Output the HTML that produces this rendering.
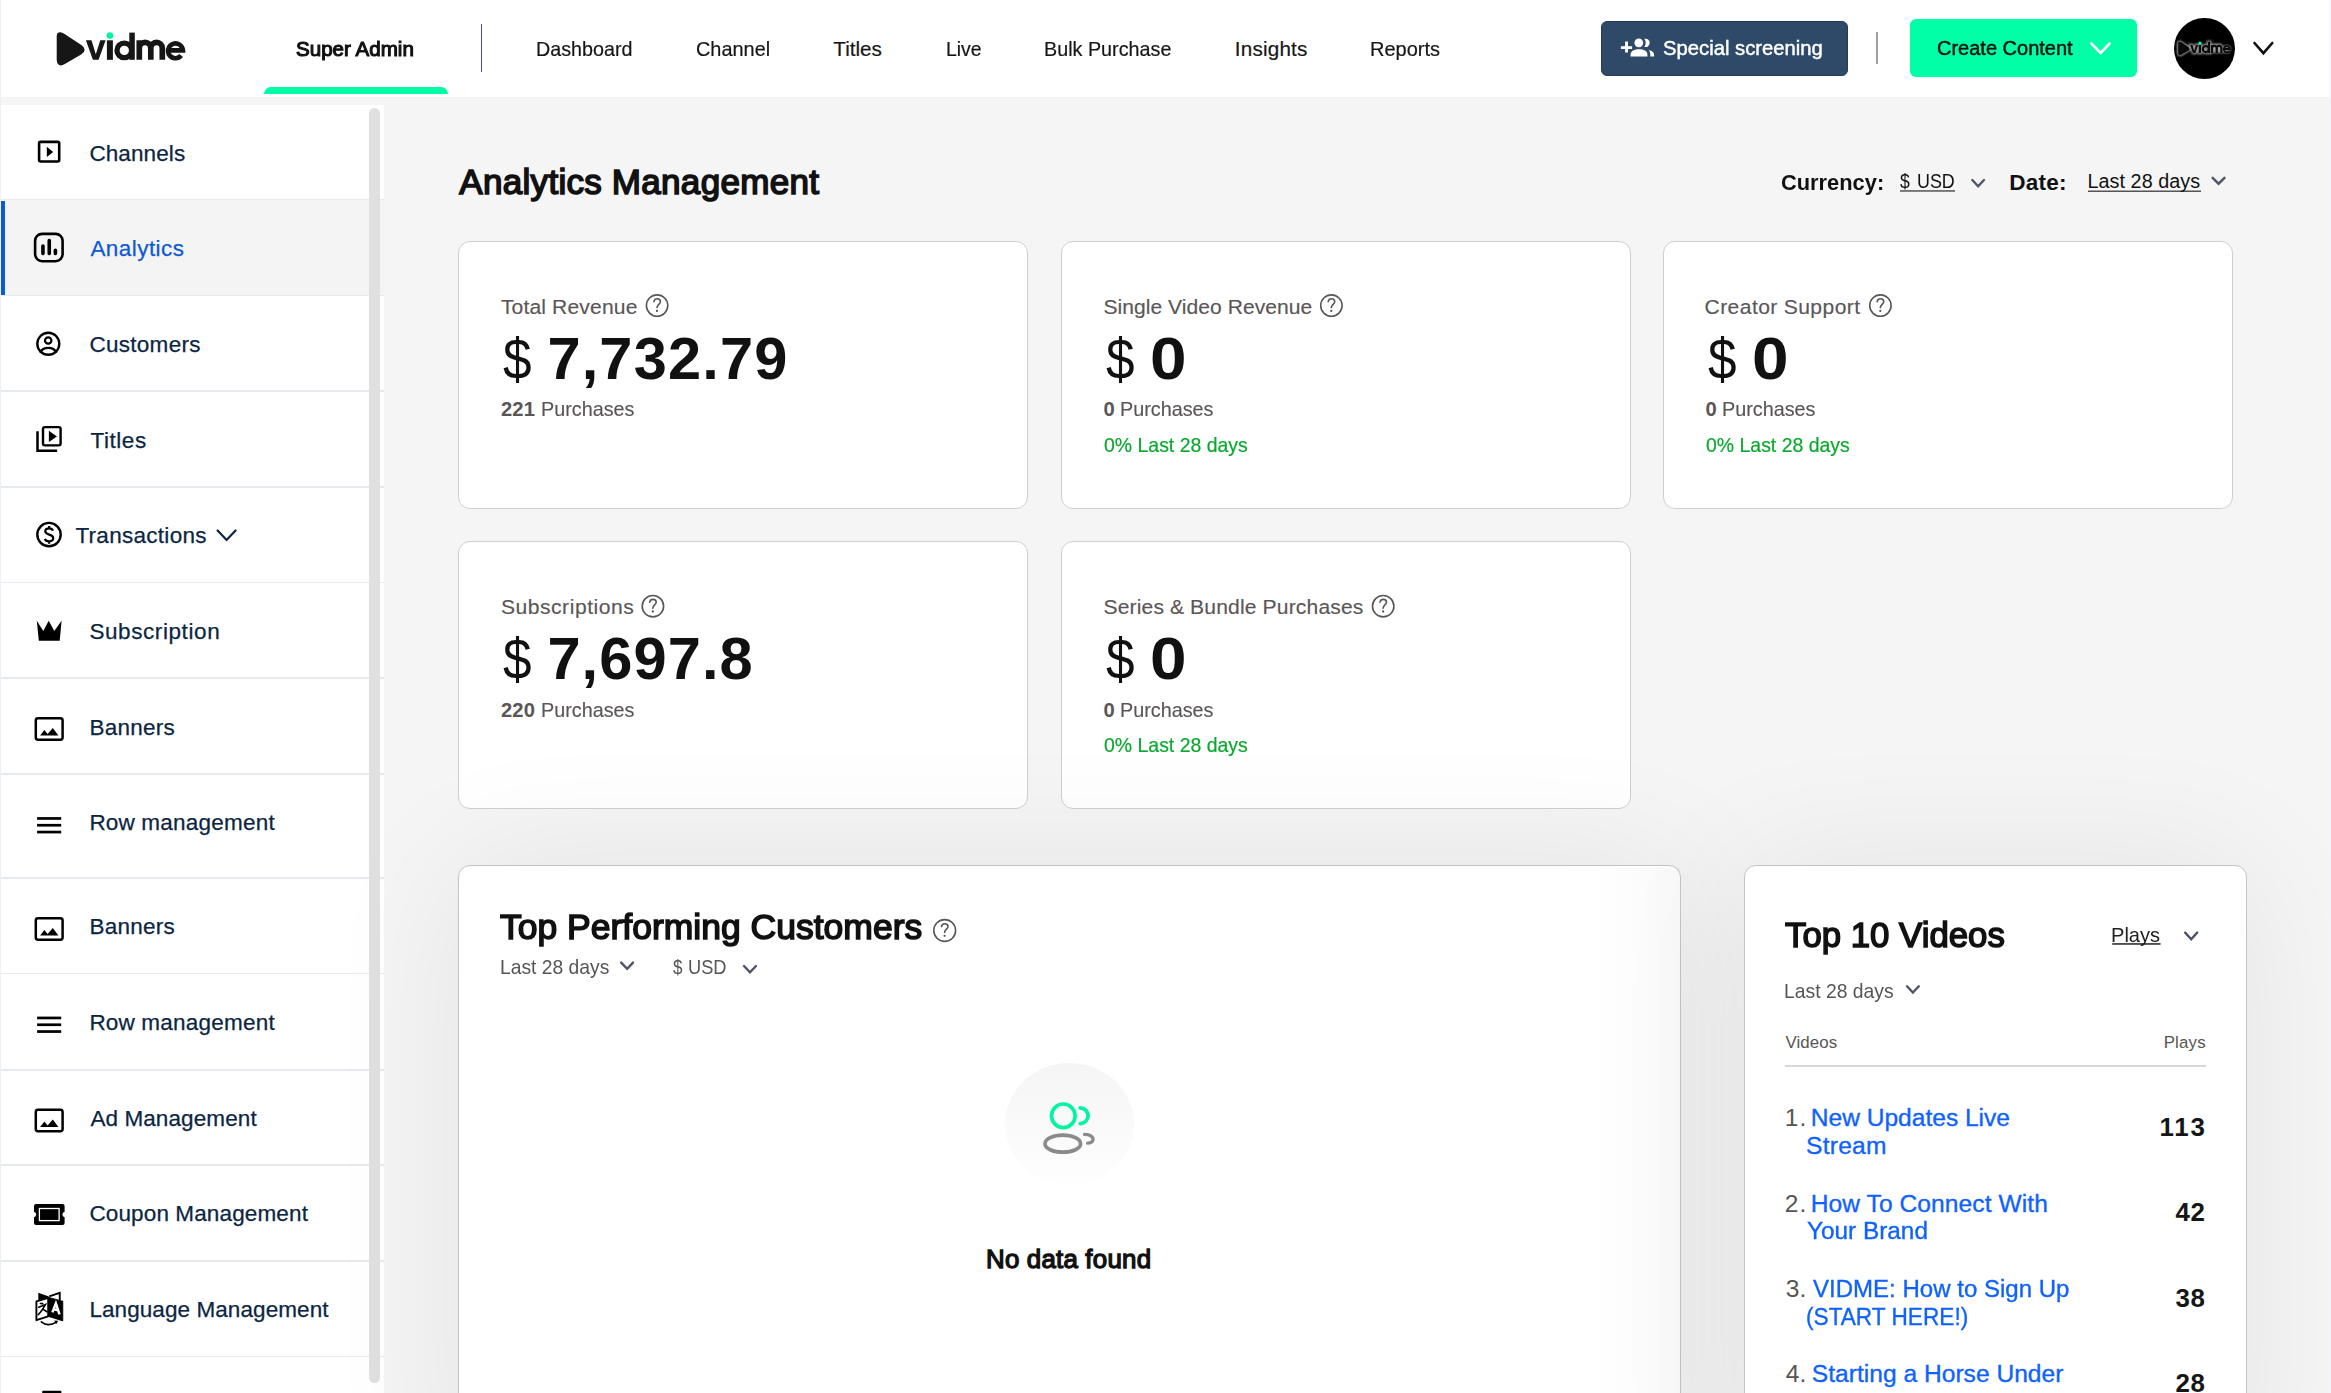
<!DOCTYPE html>
<html><head><meta charset="utf-8"><style>
html,body{margin:0;padding:0;}
body{width:2331px;height:1393px;overflow:hidden;position:relative;background:#f5f5f6;font-family:"Liberation Sans", sans-serif;}
.t{position:absolute;white-space:nowrap;}
.a{position:absolute;}
</style></head><body>
<div class="a" style="left:0px;top:0px;width:2331px;height:97px;background:#fff;"></div>
<div class="a" style="left:0px;top:105px;width:384px;height:1288px;background:#fff;"></div>
<div class="a" style="left:0px;top:0px;width:1.2px;height:1393px;background:#eceef8;z-index:1;"></div>
<div class="a" style="left:2329.8px;top:0px;width:1.2px;height:1393px;background:#f0f0f8;z-index:1;"></div>
<div class="a" style="left:1.2px;top:199.5px;width:382.8px;height:96px;background:#f4f4f4;"></div>
<div class="a" style="left:1.2px;top:200.5px;width:4.3px;height:95px;background:#0f5ad0;"></div>
<div class="a" style="left:0px;top:198.75px;width:384px;height:1.5px;background:#e6e9ed;"></div>
<div class="a" style="left:0px;top:294.75px;width:384px;height:1.5px;background:#e6e9ed;"></div>
<div class="a" style="left:0px;top:390.25px;width:384px;height:1.5px;background:#e6e9ed;"></div>
<div class="a" style="left:0px;top:486.25px;width:384px;height:1.5px;background:#e6e9ed;"></div>
<div class="a" style="left:0px;top:581.75px;width:384px;height:1.5px;background:#e6e9ed;"></div>
<div class="a" style="left:0px;top:677.25px;width:384px;height:1.5px;background:#e6e9ed;"></div>
<div class="a" style="left:0px;top:773.25px;width:384px;height:1.5px;background:#e6e9ed;"></div>
<div class="a" style="left:0px;top:877.25px;width:384px;height:1.5px;background:#e6e9ed;"></div>
<div class="a" style="left:0px;top:972.75px;width:384px;height:1.5px;background:#e6e9ed;"></div>
<div class="a" style="left:0px;top:1069.25px;width:384px;height:1.5px;background:#e6e9ed;"></div>
<div class="a" style="left:0px;top:1164.25px;width:384px;height:1.5px;background:#e6e9ed;"></div>
<div class="a" style="left:0px;top:1260.25px;width:384px;height:1.5px;background:#e6e9ed;"></div>
<div class="a" style="left:0px;top:1355.75px;width:384px;height:1.5px;background:#e6e9ed;"></div>
<div class="a" style="left:369px;top:108px;width:11px;height:1275px;background:#e0e0e0;border-radius:6px;"></div>
<div class="a" style="left:264px;top:87px;width:184px;height:7px;background:#00fda6;border-radius:7px 7px 0 0;"></div>
<div class="a" style="left:480.6px;top:24px;width:1.6px;height:48px;background:#4b5070;"></div>
<div class="a" style="left:1876px;top:31.6px;width:2px;height:32.2px;background:#a0a0a0;"></div>
<div class="a" style="left:1601px;top:21px;width:246.5px;height:54.5px;background:#2f4a68;border-radius:6px;box-sizing:border-box;border:1px solid #223d5c;"></div>
<div class="a" style="left:1910.2px;top:19.3px;width:227.1px;height:57.4px;background:#00ffa6;border-radius:6px;"></div>
<div class="a" style="left:2173.5px;top:17.5px;width:61.2px;height:61.4px;background:#000;border-radius:50%;"></div>
<div class="a" style="left:457.7px;top:240.8px;width:570.5px;height:267.9px;background:#fff;box-sizing:border-box;border:1.6px solid #cfcfcf;border-radius:12px;"></div>
<div class="a" style="left:1060.5px;top:240.8px;width:570.3px;height:267.9px;background:#fff;box-sizing:border-box;border:1.6px solid #cfcfcf;border-radius:12px;"></div>
<div class="a" style="left:1663.3px;top:240.8px;width:569.7px;height:267.9px;background:#fff;box-sizing:border-box;border:1.6px solid #cfcfcf;border-radius:12px;"></div>
<div class="a" style="left:457.7px;top:541.3px;width:570.5px;height:267.9000000000001px;background:#fff;box-sizing:border-box;border:1.6px solid #cfcfcf;border-radius:12px;"></div>
<div class="a" style="left:1060.5px;top:541.3px;width:570.3px;height:267.9000000000001px;background:#fff;box-sizing:border-box;border:1.6px solid #cfcfcf;border-radius:12px;"></div>
<div class="a" style="left:457.9px;top:865.3px;width:1223.1999999999998px;height:634.7px;background:#fff;box-sizing:border-box;border:1.6px solid #c4c4c4;border-radius:12px;box-shadow:0 0 140px 0 rgba(0,0,0,0.075);"></div>
<div class="a" style="left:1744.2px;top:865.3px;width:502.79999999999995px;height:634.7px;background:#fff;box-sizing:border-box;border:1.6px solid #c4c4c4;border-radius:12px;box-shadow:0 0 140px 0 rgba(0,0,0,0.075);"></div>
<div class="a" style="left:1590px;top:867px;width:89.5px;height:526px;background:linear-gradient(90deg,rgba(0,0,0,0),rgba(0,0,0,0.022));"></div>
<div class="a" style="left:1004.5px;top:1063px;width:129.5px;height:122px;background:linear-gradient(#f5f5f5,#fefefe);border-radius:50%;"></div>
<div class="a" style="left:1785.4px;top:1064.8px;width:420.8px;height:2px;background:#d8d8d8;"></div>
<svg class="a" style="left:0;top:0" width="2331" height="1393" viewBox="0 0 2331 1393"><g transform="translate(40,15) scale(1.0)" fill="#161616" stroke="#161616"><path d="M19.2,21.2 L19.2,45 Q19.2,49.5 23.2,47.2 L40.3,37 Q44,34.6 40.3,32.3 L23.2,21 Q19.2,18.4 19.2,21.2 Z" stroke-width="5" stroke-linejoin="round"/><path d="M45.9,25.3 H51.5 L55.8,39.2 L60.3,25.3 H65.6 L58.6,44.8 H52.9 Z" stroke="none"/><rect x="66.9" y="25.3" width="6" height="19.5" stroke="none"/><circle cx="84.3" cy="35.4" r="7.3" fill="none" stroke-width="5.3"/><rect x="89.3" y="17.6" width="5.5" height="27.2" stroke="none"/><path d="M99.3,44.8 V25.3 M99.3,33.2 A5.75,5.75 0 0 1 110.8,33.2 V44.8 M110.8,33.2 A5.75,5.75 0 0 1 122.3,33.2 V44.8" fill="none" stroke-width="5.7"/><path d="M128.4,35.3 H142.9 A7.4,7.4 0 1 0 141.2,40.6" fill="none" stroke-width="4.7"/></g><circle cx="109.9" cy="35.6" r="3.3" fill="#00f5a3"/><defs><filter id="gl" x="-20%" y="-50%" width="140%" height="200%"><feGaussianBlur stdDeviation="2.2"/></filter></defs><g transform="translate(2171.3,34.6) scale(0.41)" fill="none" stroke="#bbbbbb" stroke-width="6" filter="url(#gl)"><path d="M19.2,21.2 L19.2,45 Q19.2,49.5 23.2,47.2 L40.3,37 Q44,34.6 40.3,32.3 L23.2,21 Q19.2,18.4 19.2,21.2 Z" stroke-width="9" stroke-linejoin="round"/><path d="M45.9,25.3 H51.5 L55.8,39.2 L60.3,25.3 H65.6 L58.6,44.8 H52.9 Z" stroke="#9a9a9a"/><rect x="66.9" y="25.3" width="6" height="19.5" stroke="#9a9a9a"/><circle cx="84.3" cy="35.4" r="7.3" fill="none" stroke-width="9"/><rect x="89.3" y="17.6" width="5.5" height="27.2" stroke="#9a9a9a"/><path d="M99.3,44.8 V25.3 M99.3,33.2 A5.75,5.75 0 0 1 110.8,33.2 V44.8 M110.8,33.2 A5.75,5.75 0 0 1 122.3,33.2 V44.8" fill="none" stroke-width="10"/><path d="M128.4,35.3 H142.9 A7.4,7.4 0 1 0 141.2,40.6" fill="none" stroke-width="4.7"/></g><g transform="translate(2171.3,34.6) scale(0.41)" fill="#0a0a0a" stroke="#0a0a0a"><path d="M19.2,21.2 L19.2,45 Q19.2,49.5 23.2,47.2 L40.3,37 Q44,34.6 40.3,32.3 L23.2,21 Q19.2,18.4 19.2,21.2 Z" stroke-width="5" stroke-linejoin="round"/><path d="M45.9,25.3 H51.5 L55.8,39.2 L60.3,25.3 H65.6 L58.6,44.8 H52.9 Z" stroke="none"/><rect x="66.9" y="25.3" width="6" height="19.5" stroke="none"/><circle cx="84.3" cy="35.4" r="7.3" fill="none" stroke-width="5.3"/><rect x="89.3" y="17.6" width="5.5" height="27.2" stroke="none"/><path d="M99.3,44.8 V25.3 M99.3,33.2 A5.75,5.75 0 0 1 110.8,33.2 V44.8 M110.8,33.2 A5.75,5.75 0 0 1 122.3,33.2 V44.8" fill="none" stroke-width="5.7"/><path d="M128.4,35.3 H142.9 A7.4,7.4 0 1 0 141.2,40.6" fill="none" stroke-width="4.7"/></g><circle cx="2200" cy="43.2" r="1.6" fill="#00f5a3"/><g fill="#fff"><rect x="1620.9" y="46.2" width="11.2" height="2.8"/><rect x="1625.1" y="41.5" width="2.9" height="11"/><circle cx="1638.8" cy="42.8" r="4.4"/><path d="M1630.6,56.6 V54.5 C1630.6,51 1634.5,49.3 1639,49.3 C1643.5,49.3 1647.4,51 1647.4,54.5 V56.6 Z"/><path d="M1644.4,38.8 A4.2,4.2 0 1 1 1644.4,46.9 A7.5,7.5 0 0 0 1644.4,38.8 Z"/><path d="M1648.7,50 C1652,50.6 1654.1,52.3 1654.1,54.6 V56.6 H1650.3 V54.5 C1650.3,52.8 1649.7,51.2 1648.7,50 Z"/></g><path d="M2091.5,43.6 L2100.5,53.0 L2109.5,43.6" fill="none" stroke="#fff" stroke-width="2.8" stroke-linecap="round" stroke-linejoin="miter"/><path d="M2254.5,43.0 L2263.4,53.2 L2272.3,43.0" fill="none" stroke="#111" stroke-width="2.6" stroke-linecap="round" stroke-linejoin="miter"/><path d="M1972.3,180.0 L1978.15,186.2 L1984.0,180.0" fill="none" stroke="#4d5566" stroke-width="2.4" stroke-linecap="round" stroke-linejoin="miter"/><path d="M2212.6,177.8 L2218.55,183.7 L2224.5,177.8" fill="none" stroke="#4d5566" stroke-width="2.4" stroke-linecap="round" stroke-linejoin="miter"/><path d="M621.2,962.6 L627.1,968.8 L633.0,962.6" fill="none" stroke="#4d5566" stroke-width="2.4" stroke-linecap="round" stroke-linejoin="miter"/><path d="M744.0,966.0 L750.0,972.3 L756.0,966.0" fill="none" stroke="#4d5566" stroke-width="2.4" stroke-linecap="round" stroke-linejoin="miter"/><path d="M2185.2,932.6 L2191.2,939.2 L2197.2,932.6" fill="none" stroke="#4d5566" stroke-width="2.4" stroke-linecap="round" stroke-linejoin="miter"/><path d="M1907.0,986.3 L1912.9,992.6 L1918.8,986.3" fill="none" stroke="#4d5566" stroke-width="2.4" stroke-linecap="round" stroke-linejoin="miter"/><path d="M217.6,530.5 L226.6,540.0 L235.6,530.5" fill="none" stroke="#0c2642" stroke-width="2.2" stroke-linecap="round" stroke-linejoin="miter"/><rect x="1900" y="190.2" width="55" height="1.5" fill="#555"/><rect x="2088" y="190.5" width="113" height="1.5" fill="#555"/><rect x="2112.2" y="943.2" width="48.4" height="1.5" fill="#222"/><g fill="none" stroke="#5a5656" stroke-width="1.6" stroke-linecap="round"><circle cx="657.1" cy="305.6" r="10.7"/><path d="M653.9,301.6 C654.3000000000001,299.6 655.7,298.8 657.2,298.8 C659.1,298.8 660.4,300.1 660.4,301.70000000000005 C660.4,304.1 657.0,304.6 657.0,307.6"/></g><circle cx="657.0" cy="310.90000000000003" r="1.15" fill="#5a5656"/><g fill="none" stroke="#5a5656" stroke-width="1.6" stroke-linecap="round"><circle cx="1331.4" cy="305.6" r="10.7"/><path d="M1328.2,301.6 C1328.6000000000001,299.6 1330.0,298.8 1331.5,298.8 C1333.4,298.8 1334.7,300.1 1334.7,301.70000000000005 C1334.7,304.1 1331.3000000000002,304.6 1331.3000000000002,307.6"/></g><circle cx="1331.3000000000002" cy="310.90000000000003" r="1.15" fill="#5a5656"/><g fill="none" stroke="#5a5656" stroke-width="1.6" stroke-linecap="round"><circle cx="1880.4" cy="305.6" r="10.7"/><path d="M1877.2,301.6 C1877.6000000000001,299.6 1879.0,298.8 1880.5,298.8 C1882.4,298.8 1883.7,300.1 1883.7,301.70000000000005 C1883.7,304.1 1880.3000000000002,304.6 1880.3000000000002,307.6"/></g><circle cx="1880.3000000000002" cy="310.90000000000003" r="1.15" fill="#5a5656"/><g fill="none" stroke="#5a5656" stroke-width="1.6" stroke-linecap="round"><circle cx="652.9" cy="606.2" r="10.7"/><path d="M649.6999999999999,602.2 C650.1,600.2 651.5,599.4000000000001 653.0,599.4000000000001 C654.9,599.4000000000001 656.1999999999999,600.7 656.1999999999999,602.3000000000001 C656.1999999999999,604.7 652.8,605.2 652.8,608.2"/></g><circle cx="652.8" cy="611.5" r="1.15" fill="#5a5656"/><g fill="none" stroke="#5a5656" stroke-width="1.6" stroke-linecap="round"><circle cx="1383.2" cy="606.2" r="10.7"/><path d="M1380.0,602.2 C1380.4,600.2 1381.8,599.4000000000001 1383.3,599.4000000000001 C1385.2,599.4000000000001 1386.5,600.7 1386.5,602.3000000000001 C1386.5,604.7 1383.1000000000001,605.2 1383.1000000000001,608.2"/></g><circle cx="1383.1000000000001" cy="611.5" r="1.15" fill="#5a5656"/><g fill="none" stroke="#5a5656" stroke-width="1.6" stroke-linecap="round"><circle cx="944.7" cy="930.5" r="10.9"/><path d="M941.5,926.5 C941.9000000000001,924.5 943.3000000000001,923.7 944.8000000000001,923.7 C946.7,923.7 948.0,925.0 948.0,926.6 C948.0,929.0 944.6,929.5 944.6,932.5"/></g><circle cx="944.6" cy="935.8" r="1.15" fill="#5a5656"/><g fill="none" stroke="#000" stroke-width="2.6"><rect x="39.1" y="141.9" width="20.1" height="19.6" rx="1.5"/><rect x="35.1" y="233.9" width="27.5" height="27.3" rx="7"/><circle cx="48.3" cy="343.8" r="11.0" stroke-width="2.4"/><circle cx="48.2" cy="340.5" r="3.2" stroke-width="2.2"/><path d="M40.3,352.6 C43,346.3 53.6,346.3 56.3,352.6" stroke-width="2.4"/><rect x="43" y="427.1" width="17.6" height="18.3" rx="1.8" stroke-width="2.4"/><path d="M37.5,431.3 V450.7 H57.1" stroke-width="2.5"/><circle cx="49" cy="534.6" r="11.7" stroke-width="2.4"/><rect x="35.8" y="718.2" width="26.8" height="21.5" rx="2.2" stroke-width="2.5"/><rect x="35.8" y="918.2" width="26.8" height="21.5" rx="2.2" stroke-width="2.5"/><rect x="35.8" y="1109.7" width="26.8" height="21.5" rx="2.2" stroke-width="2.5"/></g><g fill="#000" stroke="none"><path d="M46.8,146.8 L53.2,151.9 L46.8,157 Z"/><path d="M48.9,430.8 L56.9,436.4 L48.9,442.1 Z"/><path d="M36.8,620.8 L43.3,631 L48.7,620.8 L54.3,631 L61.6,620.8 L59.7,640.7 L38.8,640.7 Z"/><path d="M40.1,735.6 L44.4,729.9 L47.6,733.9 L52.8,728 L58.4,735.6 Z"/><path d="M40.1,935.6 L44.4,929.9 L47.6,933.9 L52.8,928 L58.4,935.6 Z"/><path d="M40.1,1127.1 L44.4,1121.4 L47.6,1125.4 L52.8,1119.5 L58.4,1127.1 Z"/><rect x="37.1" y="817.1" width="24.1" height="2.7"/><rect x="37.1" y="823.9" width="24.1" height="2.7"/><rect x="37.1" y="830.7" width="24.1" height="2.7"/><rect x="37.1" y="1016.6" width="24.1" height="2.7"/><rect x="37.1" y="1023.4" width="24.1" height="2.7"/><rect x="37.1" y="1030.2" width="24.1" height="2.7"/></g><g stroke="#000" stroke-width="3.6" stroke-linecap="round"><path d="M42.95,246 V253.4 M49.25,240.6 V253.4 M55.4,250.2 V253.4"/></g><path d="M53,530.6 C52.4,529 50.9,528.3 49.2,528.3 C46.9,528.3 45.3,529.5 45.3,531.3 C45.3,535.6 53.2,533.6 53.2,538 C53.2,540 51.5,541.3 49.1,541.3 C47,541.3 45.4,540.4 44.8,538.8 M49.15,525.9 V528.3 M49.15,541.3 V543.7" fill="none" stroke="#000" stroke-width="2.2"/><path d="M36,1204.1 H62.6 Q64.6,1204.1 64.6,1206.1 V1211.8 Q62.4,1212.2 62.4,1214.5 Q62.4,1216.8 64.6,1217.2 V1223 Q64.6,1225 62.6,1225 H36 Q34,1225 34,1223 V1217.2 Q36.2,1216.8 36.2,1214.5 Q36.2,1212.2 34,1211.8 V1206.1 Q34,1204.1 36,1204.1 Z" fill="#000"/><rect x="39.4" y="1208.5" width="19.7" height="12.1" fill="none" stroke="#fff" stroke-width="1.3"/><g><path d="M38.3,1292.7 L48.9,1296.5 L47.8,1297.9 L38.3,1300.2 Z" fill="#000"/><path d="M49.2,1296.4 L59.7,1292.9 L59.8,1300.6" fill="none" stroke="#000" stroke-width="1.9"/><path d="M48.7,1297.4 L62.8,1301.2 L62.8,1320.9 L48.7,1316.5 Z" fill="#000" stroke="#000" stroke-width="0.8" stroke-linejoin="round"/><path d="M36.4,1301.4 L48.2,1297.9 L48.2,1316.4 L36.4,1320.2 Z" fill="#fff" stroke="#000" stroke-width="1.9" stroke-linejoin="round"/><path d="M52.4,1312.4 L55.9,1303.4 L59.5,1314.3 M53.7,1309.3 L58.2,1310.4" fill="none" stroke="#fff" stroke-width="2.5"/><path d="M40.4,1303.5 L42.7,1303.6 M38.7,1307.2 L45.4,1304.6 C43.5,1308 41,1312 38.3,1314.6 M43.5,1309.6 L47,1311.8" fill="none" stroke="#000" stroke-width="1.6" stroke-linecap="round"/><path d="M41.3,1321.8 Q47.8,1327.2 56.3,1322.3" fill="none" stroke="#000" stroke-width="1.6" stroke-linecap="round"/><path d="M54.3,1320.4 L58.2,1320.7 L56.4,1324 Z" fill="#000"/></g><rect x="42.2" y="1390.8" width="19.2" height="4" fill="#000" rx="1"/><g fill="none" stroke-width="3.7" stroke-linecap="round"><circle cx="1063.3" cy="1115.8" r="11.8" stroke="#00f5a0"/><path d="M1080.2,1107.8 A7.9,7.9 0 0 1 1080.2,1123.6" stroke="#00f5a0"/><ellipse cx="1062.8" cy="1143.7" rx="17.8" ry="8.5" stroke="#8a8a8a"/><path d="M1084.5,1134.4 C1090,1134.6 1093,1136.8 1093,1139.6 C1093,1141.8 1090.5,1143.2 1087.6,1143.2" stroke="#8a8a8a" stroke-width="3.3"/></g></svg>
<div class="t" style="left:296.30px;top:39px;font-size:20.64px;line-height:20.64px;color:#111;transform:scaleX(0.998);transform-origin:0 0;-webkit-text-stroke:1.1px #111;">Super Admin</div>
<div class="t" style="left:536.44px;top:39px;font-size:20.64px;line-height:20.64px;color:#161616;transform:scaleX(0.956);transform-origin:0 0;-webkit-text-stroke:0.2px #161616;">Dashboard</div>
<div class="t" style="left:695.64px;top:39px;font-size:20.64px;line-height:20.64px;color:#161616;transform:scaleX(0.965);transform-origin:0 0;-webkit-text-stroke:0.2px #161616;">Channel</div>
<div class="t" style="left:833.30px;top:39px;font-size:20.64px;line-height:20.64px;color:#161616;-webkit-text-stroke:0.2px #161616;">Titles</div>
<div class="t" style="left:945.56px;top:39px;font-size:20.64px;line-height:20.64px;color:#161616;transform:scaleX(0.941);transform-origin:0 0;-webkit-text-stroke:0.2px #161616;">Live</div>
<div class="t" style="left:1044.44px;top:39px;font-size:20.64px;line-height:20.64px;color:#161616;transform:scaleX(0.958);transform-origin:0 0;-webkit-text-stroke:0.2px #161616;">Bulk Purchase</div>
<div class="t" style="left:1234.80px;top:39px;font-size:20.64px;line-height:20.64px;color:#161616;letter-spacing:0.205px;-webkit-text-stroke:0.2px #161616;">Insights</div>
<div class="t" style="left:1370.43px;top:39px;font-size:20.64px;line-height:20.64px;color:#161616;transform:scaleX(0.970);transform-origin:0 0;-webkit-text-stroke:0.2px #161616;">Reports</div>
<div class="t" style="left:1663.40px;top:38px;font-size:20.35px;line-height:20.35px;color:#fff;transform:scaleX(0.995);transform-origin:0 0;-webkit-text-stroke:0.45px #fff;">Special screening</div>
<div class="t" style="left:1937.22px;top:38px;font-size:20.35px;line-height:20.35px;color:#111;transform:scaleX(0.983);transform-origin:0 0;-webkit-text-stroke:0.45px #111;">Create Content</div>
<div class="t" style="left:89.40px;top:143px;font-size:22.53px;line-height:22.53px;color:#0c2642;letter-spacing:0.097px;-webkit-text-stroke:0.25px #0c2642;">Channels</div>
<div class="t" style="left:90.40px;top:238px;font-size:22.53px;line-height:22.53px;color:#0f5ad0;letter-spacing:0.439px;-webkit-text-stroke:0.25px #0f5ad0;">Analytics</div>
<div class="t" style="left:89.40px;top:334px;font-size:22.53px;line-height:22.53px;color:#0c2642;letter-spacing:0.282px;-webkit-text-stroke:0.25px #0c2642;">Customers</div>
<div class="t" style="left:90.40px;top:430px;font-size:22.53px;line-height:22.53px;color:#0c2642;letter-spacing:0.570px;-webkit-text-stroke:0.25px #0c2642;">Titles</div>
<div class="t" style="left:75.40px;top:525px;font-size:22.53px;line-height:22.53px;color:#0c2642;letter-spacing:0.277px;-webkit-text-stroke:0.25px #0c2642;">Transactions</div>
<div class="t" style="left:89.40px;top:621px;font-size:22.53px;line-height:22.53px;color:#0c2642;letter-spacing:0.579px;-webkit-text-stroke:0.25px #0c2642;">Subscription</div>
<div class="t" style="left:89.40px;top:717px;font-size:22.53px;line-height:22.53px;color:#0c2642;letter-spacing:0.258px;-webkit-text-stroke:0.25px #0c2642;">Banners</div>
<div class="t" style="left:89.40px;top:812px;font-size:22.53px;line-height:22.53px;color:#0c2642;letter-spacing:0.224px;word-spacing:-0.224px;-webkit-text-stroke:0.25px #0c2642;">Row management</div>
<div class="t" style="left:89.40px;top:916px;font-size:22.53px;line-height:22.53px;color:#0c2642;letter-spacing:0.258px;-webkit-text-stroke:0.25px #0c2642;">Banners</div>
<div class="t" style="left:89.40px;top:1012px;font-size:22.53px;line-height:22.53px;color:#0c2642;letter-spacing:0.224px;word-spacing:-0.224px;-webkit-text-stroke:0.25px #0c2642;">Row management</div>
<div class="t" style="left:90.40px;top:1108px;font-size:22.53px;line-height:22.53px;color:#0c2642;letter-spacing:0.099px;word-spacing:-0.099px;-webkit-text-stroke:0.25px #0c2642;">Ad Management</div>
<div class="t" style="left:89.40px;top:1203px;font-size:22.53px;line-height:22.53px;color:#0c2642;letter-spacing:0.130px;word-spacing:-0.130px;-webkit-text-stroke:0.25px #0c2642;">Coupon Management</div>
<div class="t" style="left:89.40px;top:1299px;font-size:22.53px;line-height:22.53px;color:#0c2642;letter-spacing:0.074px;word-spacing:-0.074px;-webkit-text-stroke:0.25px #0c2642;">Language Management</div>
<div class="t" style="left:459.30px;top:164px;font-size:35.03px;line-height:35.03px;color:#111;letter-spacing:0.300px;word-spacing:-0.300px;-webkit-text-stroke:1.6px #111;">Analytics Management</div>
<div class="t" style="left:1781.20px;top:172px;font-size:22.38px;line-height:22.38px;color:#111;font-weight:700;transform:scaleX(0.976);transform-origin:0 0;">Currency:</div>
<div class="t" style="left:1900.30px;top:172px;font-size:19.77px;line-height:19.77px;color:#111;transform:scaleX(0.891);transform-origin:0 0;">$</div>
<div class="t" style="left:1916.60px;top:172px;font-size:19.77px;line-height:19.77px;color:#111;transform:scaleX(0.905);transform-origin:0 0;">USD</div>
<div class="t" style="left:2009.30px;top:172px;font-size:22.53px;line-height:22.53px;color:#111;font-weight:700;letter-spacing:0.199px;">Date:</div>
<div class="t" style="left:2087.50px;top:172px;font-size:19.77px;line-height:19.77px;color:#111;letter-spacing:0.067px;word-spacing:-0.067px;">Last 28 days</div>
<div class="t" style="left:500.90px;top:296px;font-size:21.08px;line-height:21.08px;color:#5a5656;letter-spacing:0.156px;word-spacing:-0.156px;-webkit-text-stroke:0.15px #5a5656;">Total Revenue</div>
<div class="t" style="left:502.90px;top:330px;font-size:58.00px;line-height:58.00px;color:#111;transform:scaleX(0.884);transform-origin:0 0;">$</div>
<div class="t" style="left:547.40px;top:329px;font-size:59.59px;line-height:59.59px;color:#111;font-weight:700;letter-spacing:1.146px;">7,732.79</div>
<div class="t" style="left:500.90px;top:399px;font-size:20.20px;line-height:20.20px;color:#5a5656;font-weight:700;letter-spacing:0.223px;">221</div>
<div class="t" style="left:540.82px;top:399px;font-size:20.20px;line-height:20.20px;color:#5a5656;transform:scaleX(0.980);transform-origin:0 0;-webkit-text-stroke:0.15px #5a5656;">Purchases</div>
<div class="t" style="left:1103.50px;top:296px;font-size:21.08px;line-height:21.08px;color:#5a5656;letter-spacing:0.027px;word-spacing:-0.027px;-webkit-text-stroke:0.15px #5a5656;">Single Video Revenue</div>
<div class="t" style="left:1105.50px;top:330px;font-size:58.00px;line-height:58.00px;color:#111;transform:scaleX(0.884);transform-origin:0 0;">$</div>
<div class="t" style="left:1149.79px;top:329px;font-size:59.59px;line-height:59.59px;color:#111;font-weight:700;transform:scaleX(1.103);transform-origin:0 0;">0</div>
<div class="t" style="left:1103.50px;top:399px;font-size:20.20px;line-height:20.20px;color:#5a5656;font-weight:700;">0</div>
<div class="t" style="left:1120.12px;top:399px;font-size:20.20px;line-height:20.20px;color:#5a5656;transform:scaleX(0.980);transform-origin:0 0;-webkit-text-stroke:0.15px #5a5656;">Purchases</div>
<div class="t" style="left:1103.50px;top:435px;font-size:20.06px;line-height:20.06px;color:#0aa82e;transform:scaleX(0.970);transform-origin:0 0;-webkit-text-stroke:0.2px #0aa82e;">0% Last 28 days</div>
<div class="t" style="left:1704.50px;top:296px;font-size:21.08px;line-height:21.08px;color:#5a5656;letter-spacing:0.434px;word-spacing:-0.434px;-webkit-text-stroke:0.15px #5a5656;">Creator Support</div>
<div class="t" style="left:1707.50px;top:330px;font-size:58.00px;line-height:58.00px;color:#111;transform:scaleX(0.884);transform-origin:0 0;">$</div>
<div class="t" style="left:1751.79px;top:329px;font-size:59.59px;line-height:59.59px;color:#111;font-weight:700;transform:scaleX(1.103);transform-origin:0 0;">0</div>
<div class="t" style="left:1705.50px;top:399px;font-size:20.20px;line-height:20.20px;color:#5a5656;font-weight:700;">0</div>
<div class="t" style="left:1722.12px;top:399px;font-size:20.20px;line-height:20.20px;color:#5a5656;transform:scaleX(0.980);transform-origin:0 0;-webkit-text-stroke:0.15px #5a5656;">Purchases</div>
<div class="t" style="left:1705.50px;top:435px;font-size:20.06px;line-height:20.06px;color:#0aa82e;transform:scaleX(0.970);transform-origin:0 0;-webkit-text-stroke:0.2px #0aa82e;">0% Last 28 days</div>
<div class="t" style="left:500.90px;top:596px;font-size:21.08px;line-height:21.08px;color:#5a5656;letter-spacing:0.530px;-webkit-text-stroke:0.15px #5a5656;">Subscriptions</div>
<div class="t" style="left:502.90px;top:630px;font-size:58.00px;line-height:58.00px;color:#111;transform:scaleX(0.884);transform-origin:0 0;">$</div>
<div class="t" style="left:547.40px;top:629px;font-size:59.59px;line-height:59.59px;color:#111;font-weight:700;letter-spacing:1.093px;">7,697.8</div>
<div class="t" style="left:500.90px;top:700px;font-size:20.20px;line-height:20.20px;color:#5a5656;font-weight:700;letter-spacing:0.223px;">220</div>
<div class="t" style="left:540.82px;top:700px;font-size:20.20px;line-height:20.20px;color:#5a5656;transform:scaleX(0.980);transform-origin:0 0;-webkit-text-stroke:0.15px #5a5656;">Purchases</div>
<div class="t" style="left:1103.50px;top:596px;font-size:21.08px;line-height:21.08px;color:#5a5656;letter-spacing:0.157px;word-spacing:-0.157px;-webkit-text-stroke:0.15px #5a5656;">Series &amp; Bundle Purchases</div>
<div class="t" style="left:1105.50px;top:630px;font-size:58.00px;line-height:58.00px;color:#111;transform:scaleX(0.884);transform-origin:0 0;">$</div>
<div class="t" style="left:1149.79px;top:629px;font-size:59.59px;line-height:59.59px;color:#111;font-weight:700;transform:scaleX(1.103);transform-origin:0 0;">0</div>
<div class="t" style="left:1103.50px;top:700px;font-size:20.20px;line-height:20.20px;color:#5a5656;font-weight:700;">0</div>
<div class="t" style="left:1120.12px;top:700px;font-size:20.20px;line-height:20.20px;color:#5a5656;transform:scaleX(0.980);transform-origin:0 0;-webkit-text-stroke:0.15px #5a5656;">Purchases</div>
<div class="t" style="left:1103.50px;top:735px;font-size:20.06px;line-height:20.06px;color:#0aa82e;transform:scaleX(0.970);transform-origin:0 0;-webkit-text-stroke:0.2px #0aa82e;">0% Last 28 days</div>
<div class="t" style="left:500.40px;top:910px;font-size:35.76px;line-height:35.76px;color:#111;transform:scaleX(0.993);transform-origin:0 0;-webkit-text-stroke:1.6px #111;">Top Performing Customers</div>
<div class="t" style="left:499.84px;top:957px;font-size:20.20px;line-height:20.20px;color:#555;transform:scaleX(0.955);transform-origin:0 0;">Last 28 days</div>
<div class="t" style="left:672.80px;top:957px;font-size:20.20px;line-height:20.20px;color:#555;transform:scaleX(0.845);transform-origin:0 0;">$</div>
<div class="t" style="left:688.10px;top:957px;font-size:20.20px;line-height:20.20px;color:#555;transform:scaleX(0.904);transform-origin:0 0;">USD</div>
<div class="t" style="left:986.00px;top:1247px;font-size:25.87px;line-height:25.87px;color:#111;letter-spacing:0.261px;word-spacing:-0.261px;-webkit-text-stroke:1.3px #111;">No data found</div>
<div class="t" style="left:1785.40px;top:918px;font-size:35.90px;line-height:35.90px;color:#111;transform:scaleX(0.969);transform-origin:0 0;-webkit-text-stroke:1.6px #111;">Top 10 Videos</div>
<div class="t" style="left:2111.41px;top:925px;font-size:20.20px;line-height:20.20px;color:#222;transform:scaleX(0.994);transform-origin:0 0;">Plays</div>
<div class="t" style="left:1784.44px;top:981px;font-size:20.20px;line-height:20.20px;color:#555;transform:scaleX(0.958);transform-origin:0 0;">Last 28 days</div>
<div class="t" style="left:1785.40px;top:1035px;font-size:16.86px;line-height:16.86px;color:#555;letter-spacing:0.097px;">Videos</div>
<div class="t" style="left:2163.70px;top:1035px;font-size:16.86px;line-height:16.86px;color:#555;letter-spacing:0.176px;">Plays</div>
<div class="t" style="left:1784.70px;top:1106px;font-size:24.56px;line-height:24.56px;color:#555;letter-spacing:1.048px;">1.</div>
<div class="t" style="left:1810.80px;top:1106px;font-size:24.56px;line-height:24.56px;color:#0f62fe;transform:scaleX(1.000);transform-origin:0 0;-webkit-text-stroke:0.35px #0f62fe;">New Updates Live</div>
<div class="t" style="left:1806.00px;top:1134px;font-size:24.56px;line-height:24.56px;color:#0f62fe;letter-spacing:0.256px;-webkit-text-stroke:0.35px #0f62fe;">Stream</div>
<div class="t" style="left:2159.40px;top:1115px;font-size:25.87px;line-height:25.87px;color:#161616;font-weight:700;letter-spacing:1.882px;">113</div>
<div class="t" style="left:1784.70px;top:1192px;font-size:24.56px;line-height:24.56px;color:#555;letter-spacing:1.048px;">2.</div>
<div class="t" style="left:1810.80px;top:1192px;font-size:24.56px;line-height:24.56px;color:#0f62fe;letter-spacing:0.099px;word-spacing:-0.099px;-webkit-text-stroke:0.35px #0f62fe;">How To Connect With</div>
<div class="t" style="left:1807.00px;top:1219px;font-size:24.56px;line-height:24.56px;color:#0f62fe;transform:scaleX(0.992);transform-origin:0 0;-webkit-text-stroke:0.35px #0f62fe;">Your Brand</div>
<div class="t" style="left:2175.60px;top:1200px;font-size:25.87px;line-height:25.87px;color:#161616;font-weight:700;letter-spacing:0.518px;">42</div>
<div class="t" style="left:1785.70px;top:1277px;font-size:24.56px;line-height:24.56px;color:#555;letter-spacing:0.048px;">3.</div>
<div class="t" style="left:1812.80px;top:1277px;font-size:24.56px;line-height:24.56px;color:#0f62fe;transform:scaleX(0.979);transform-origin:0 0;-webkit-text-stroke:0.35px #0f62fe;">VIDME: How to Sign Up</div>
<div class="t" style="left:1806.08px;top:1305px;font-size:24.56px;line-height:24.56px;color:#0f62fe;transform:scaleX(0.922);transform-origin:0 0;-webkit-text-stroke:0.35px #0f62fe;">(START HERE!)</div>
<div class="t" style="left:2175.60px;top:1286px;font-size:25.87px;line-height:25.87px;color:#161616;font-weight:700;letter-spacing:0.518px;">38</div>
<div class="t" style="left:1785.70px;top:1362px;font-size:24.56px;line-height:24.56px;color:#555;letter-spacing:0.048px;">4.</div>
<div class="t" style="left:1811.80px;top:1362px;font-size:24.56px;line-height:24.56px;color:#0f62fe;letter-spacing:0.032px;word-spacing:-0.032px;-webkit-text-stroke:0.35px #0f62fe;">Starting a Horse Under</div>
<div class="t" style="left:2175.60px;top:1371px;font-size:25.87px;line-height:25.87px;color:#161616;font-weight:700;letter-spacing:0.518px;">28</div>
</body></html>
